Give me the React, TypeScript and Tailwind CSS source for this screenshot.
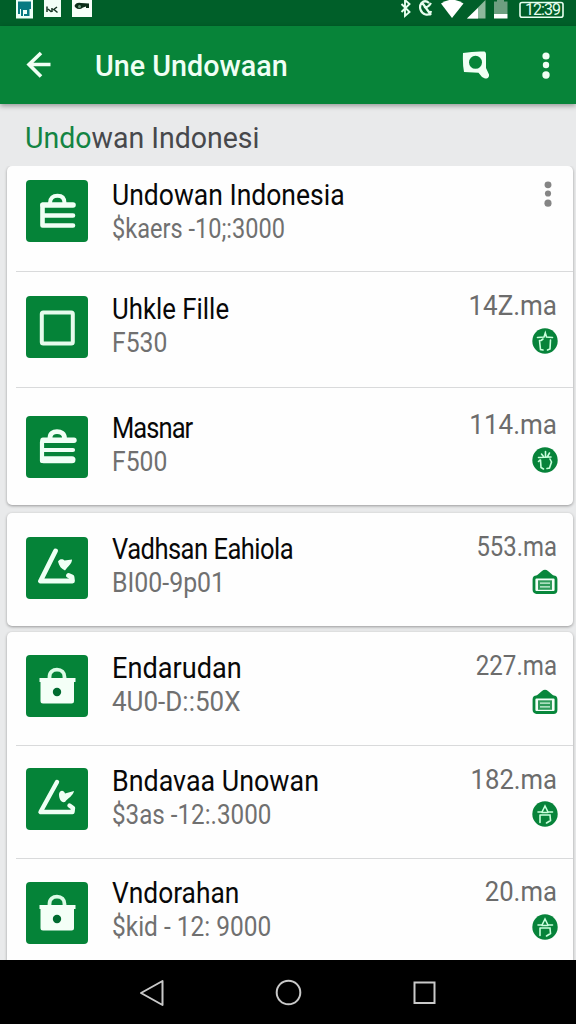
import type { ReactNode } from "react";

type IconName = "case" | "caseBold" | "square" | "slope" | "slopeHeart" | "lock";
type BadgeName = "star" | "bin" | "home" | "pot";

interface Item {
  title: string;
  titleClass: string;
  sub: string;
  subClass: string;
  icon: IconName;
  amount?: string;
  amountClass?: string;
  badge?: BadgeName;
  rowClass: string;
  iconClass: string;
  textClass: string;
  sideClass: string;
  badgeClass?: string;
}

function TileIcon({ name }: { name: IconName }) {
  const art: Record<IconName, ReactNode> = {
    case: (
      <g fill="none" stroke="#f0fff5" strokeLinecap="round" strokeLinejoin="round">
        <path d="M24 23 C24 18 27 15.700 31.500 15.700 C36 15.700 38.500 18 38.500 23" strokeWidth="4" />
        <path d="M17 25 H47" strokeWidth="5.600" />
        <path d="M16.500 25 V45.500 H47 M18 35.500 H47" strokeWidth="4.600" />
      </g>
    ),
    caseBold: (
      <g fill="none" stroke="#f0fff5" strokeLinecap="round" strokeLinejoin="round">
        <path d="M24 22 C24 17.500 27 15.700 31 15.700 C35 15.700 38.500 17.500 38.500 22" strokeWidth="4.800" />
        <path d="M17 24.300 H48" strokeWidth="5.400" />
        <path d="M16 26 V45 M18 34 H47" strokeWidth="4.200" />
        <path d="M17.500 43.800 H46" strokeWidth="7" />
      </g>
    ),
    square: <rect x="15.800" y="16.500" width="31" height="31" rx="1.500" fill="none" stroke="#e6fbec" strokeWidth="4" />,
    slope: (
      <g>
        <path d="M29.500 14 L14.500 44 H46.500 L46 40 L42.500 38.500" fill="none" stroke="#eefff4" strokeWidth="4.800" strokeLinecap="round" strokeLinejoin="round" />
        <path d="M32 24.500 C34 21.500 37 22 38.500 23.500 L46 22.500 C46 27 42 29 39 33.500 C35.500 32 33 29 32 24.500Z" fill="#eefff4" />
      </g>
    ),
    slopeHeart: (
      <g>
        <path d="M31 14 L14.500 44 H46.500 L47 40 L43.500 37.500" fill="none" stroke="#eefff4" strokeWidth="4.400" strokeLinecap="round" strokeLinejoin="round" />
        <path d="M33 26 C34 21.500 38 22 39 25.500 L48 23 C47 28 42 30 39 34 C35 35 33 31 33 26Z" fill="#eefff4" />
      </g>
    ),
    lock: (
      <g>
        <path d="M23.500 24 V22 C23.500 17 27 14.600 31 14.600 C35.500 14.600 38.500 17.500 38.500 22 V24" fill="none" stroke="#dcfbe6" strokeWidth="3.800" />
        <path d="M13.500 23 H49.500 V27 H48 V46 Q48 48.500 45.500 48.500 H17 Q14.500 48.500 14.500 46 V27 H13.500Z" fill="#f4fff7" />
        <circle cx="31" cy="37" r="4.200" fill="#006b30" />
      </g>
    ),
  };
  return (
    <svg viewBox="0 0 62 62" className="block h-full w-full">
      {art[name]}
    </svg>
  );
}

function Badge({ name }: { name: BadgeName }) {
  if (name === "home") {
    return (
      <svg viewBox="0 0 26 26" className="block size-[26px]">
        <path d="M3 8 L10 2 Q13 -0.500 16 2 L23 8Z" fill="#08873c" />
        <rect x="2" y="8" width="22" height="15.500" rx="2.500" fill="#f3fff7" stroke="#08873c" strokeWidth="2.800" />
        <rect x="6" y="11.300" width="14" height="9.500" fill="#2f9b5a" />
        <path d="M8 14.200 H18 M8 17.800 H18" stroke="#d5f5df" strokeWidth="1.300" />
      </svg>
    );
  }
  return (
    <svg viewBox="0 0 26 26" className="block size-[26px]" fill="none" stroke="#c9ffdc" strokeWidth="1.600" strokeLinecap="round">
      <circle cx="13" cy="13" r="12.700" fill="#07833a" stroke="none" />
      {name === "bin" && <path d="M5.500 9.500 L12 9 L13.300 5 L14.500 9 L20.500 9.500 M7.500 12.500 L8.500 21.500 L11 22 M18.500 12 L18 21 L15.500 22 M9 12.500 L11 11" />}
      {name === "pot" && <path d="M9.500 7 L11.500 9.500 M13.500 4.500 V9.500 M17.500 6 L15.500 9.500 M6.500 10.500 L19 10 M8 13 L6.500 14.500 M8.500 13 L9 20.500 L11.500 22 M18 12 L19.500 15 L17.500 21 L15 21.500" />}
      {name === "star" && <path d="M6 11 H10 L13 5 L16 11 H20.500 M10 11.500 L16 11.500 M8 14 V21.500 M8 14 H18 L18.500 19.500 L14.500 22" />}
    </svg>
  );
}

function Dots({ className }: { className: string }) {
  return (
    <svg viewBox="0 0 8 28" className={className} fill="currentColor">
      <circle cx="4" cy="4" r="3.600" />
      <circle cx="4" cy="13" r="3.200" />
      <circle cx="4" cy="23" r="3.700" />
    </svg>
  );
}

function Row({ item }: { item: Item }) {
  return (
    <div className={`flex pl-[19px] pr-4 ${item.rowClass}`}>
      <div className={`h-[62px] w-[62px] shrink-0 rounded-[4px] bg-[#058338] ${item.iconClass}`}>
        <TileIcon name={item.icon} />
      </div>
      <div className={`ml-6 flex flex-1 flex-col items-start whitespace-pre leading-[34px] ${item.textClass}`}>
        <span className={`origin-left text-[29px] text-[#080808] ${item.titleClass}`}>{item.title}</span>
        <span className={`origin-left text-[27px] text-[#707070] ${item.subClass}`}>{item.sub}</span>
      </div>
      <div className={`flex shrink-0 flex-col items-end ${item.sideClass}`}>
        {item.amount ? (
          <span className={`origin-right whitespace-pre text-[27px] leading-[34px] text-[#6c6c6c] ${item.amountClass}`}>{item.amount}</span>
        ) : (
          <Dots className="mr-[5px] h-[27px] w-[8px] text-[#858585]" />
        )}
        {item.badge && (
          <div className={`-mr-[1px] ${item.badgeClass}`}>
            <Badge name={item.badge} />
          </div>
        )}
      </div>
    </div>
  );
}

const groups: { className: string; items: Item[] }[] = [
  {
    className: "h-[339px]",
    items: [
      { title: "Undowan Indonesia", titleClass: "scale-x-[0.914]", sub: "$kaers -10;:3000", subClass: "scale-x-[0.872]", icon: "case", rowClass: "h-[105px]", iconClass: "mt-[14px]", textClass: "pt-[12px]", sideClass: "pt-[15px]" },
      { title: "Uhkle Fille", titleClass: "scale-x-[0.889]", sub: "F530", subClass: "scale-x-[0.914]", icon: "square", amount: "14Z.ma", amountClass: "scale-x-[0.963]", badge: "bin", rowClass: "h-[115px]", iconClass: "mt-[24px]", textClass: "pt-[20px]", sideClass: "pt-[17px]", badgeClass: "mt-[5px]" },
      { title: "Masnar", titleClass: "scale-x-[0.88] tracking-[-1.07px]", sub: "F500", subClass: "scale-x-[0.914]", icon: "caseBold", amount: "114.ma", amountClass: "scale-x-[0.963]", badge: "pot", rowClass: "h-[117px]", iconClass: "mt-[28px]", textClass: "pt-[23px]", sideClass: "pt-[20px]", badgeClass: "mt-[5px]" },
    ],
  },
  {
    className: "mt-2 h-[113px]",
    items: [
      { title: "Vadhsan Eahiola", titleClass: "scale-x-[0.88] tracking-[-0.58px]", sub: "BI00-9p01", subClass: "scale-x-[0.922]", icon: "slope", amount: "553.ma", amountClass: "scale-x-[0.886]", badge: "home", rowClass: "h-[113px]", iconClass: "mt-[24px]", textClass: "pt-[19px]", sideClass: "pt-[17px]", badgeClass: "mt-[5px]" },
    ],
  },
  {
    className: "mt-[6px] h-[350px]",
    items: [
      { title: "Endarudan", titleClass: "scale-x-[0.936]", sub: "4U0-D::50X", subClass: "scale-x-[0.963]", icon: "lock", amount: "227.ma", amountClass: "scale-x-[0.893]", badge: "home", rowClass: "h-[113px]", iconClass: "mt-[23px]", textClass: "pt-[19px]", sideClass: "pt-[17px]", badgeClass: "mt-[6px]" },
      { title: "Bndavaa Unowan", titleClass: "scale-x-[0.926]", sub: "$3as -12:.3000", subClass: "scale-x-[0.896]", icon: "slopeHeart", amount: "182.ma", amountClass: "scale-x-[0.95]", badge: "star", rowClass: "h-[112px]", iconClass: "mt-[22px]", textClass: "pt-[18px]", sideClass: "pt-[17px]", badgeClass: "mt-[4px]" },
      { title: "Vndorahan", titleClass: "scale-x-[0.908]", sub: "$kid - 12: 9000", subClass: "scale-x-[0.906]", icon: "lock", amount: "20.ma", amountClass: "scale-x-[0.95]", badge: "star", rowClass: "h-[112px]", iconClass: "mt-[23px]", textClass: "pt-[17px]", sideClass: "pt-[16px]", badgeClass: "mt-[5px]" },
    ],
  },
];

function StatusBar() {
  return (
    <div className="flex h-[26px] items-start bg-[#005f29] text-[#e8fff0]">
      <svg viewBox="0 0 96 26" className="h-[26px] w-24">
        <rect x="16" y="0" width="17" height="18.500" fill="#eefff7" />
        <path d="M18 1.500 H31 V9 H29.500 V16 H24 V14 H27 V10 H23 V16 H21 V9 H20 V14 H18Z" fill="#087a82" />
        <rect x="44" y="0" width="17" height="17" fill="#f2fff7" />
        <path d="M47 6.500 V12 M48 9 L51.500 12 M52 8 V12 M53 10 L57 7 M54 9.500 L57.500 12.500" stroke="#173424" strokeWidth="1.500" />
        <rect x="72" y="0" width="20" height="17" fill="#f7fff9" />
        <path d="M74.500 6 Q76 2 81 3 L89 3.500 V8 H86 V6.500 L83 7.500 Q79 10.500 75.500 7.500Z" fill="#0a2e18" />
        <circle cx="79.500" cy="6.500" r="1.500" fill="#6e9b80" />
      </svg>
      <svg viewBox="0 0 184 26" className="ml-auto h-[26px] w-[184px]" fill="none" stroke="currentColor">
        <path d="M9.500 4 L17.500 12 L13 16 V0 L17.500 4 L9.500 12" strokeWidth="1.900" />
        <path d="M37 3 Q33 -0.500 29.500 3 C26.500 7 28.500 13 33.500 14.500 Q38 15.500 39 11 M30 2.500 L39 15 M32 7 Q36 8 39 3" strokeWidth="2.200" />
        <path d="M49 3.500 Q60 -4 71.500 3.500 L60 18Z" fill="#fff" stroke="none" />
        <path d="M75 18.500 L93.500 0 V18.500Z" fill="#8db89c" stroke="none" />
        <path d="M75 18.500 L86 8 V18.500Z" fill="#fff" stroke="none" />
        <path d="M102 1.500 H105 V0 H112 V1.500 H115.500 V14 H102Z" fill="#6d9f80" stroke="none" />
        <path d="M102 14 H115.500 V18.500 H102Z" fill="#fff" stroke="none" />
        <rect x="128" y="2.500" width="43" height="14.800" rx="2" strokeWidth="1.600" />
        <text x="133" y="15" fontFamily="Roboto, sans-serif" fontSize="16" fill="currentColor" stroke="none" textLength="36">12:39</text>
      </svg>
    </div>
  );
}

export default function App() {
  return (
    <div className="flex h-[1024px] w-[576px] flex-col overflow-hidden bg-[#e9eaeb] font-['Roboto',sans-serif]">
      <StatusBar />
      <header className="z-10 flex h-[78px] shrink-0 items-center bg-[#078439] text-[#f0fff4] shadow-[0_2px_5px_rgba(0,0,0,0.35)]">
        <svg viewBox="0 0 26 28" className="ml-[26px] h-7 w-[26px]" fill="none" stroke="currentColor" strokeWidth="3.600">
          <path d="M24.500 13.500 H3 M15 2 L3 13.500 L15 25.500" />
        </svg>
        <h1 className="ml-[43px] mt-px origin-left scale-x-[0.957] whitespace-pre text-[30px] font-medium leading-[34px]">Une Undowaan</h1>
        <svg viewBox="0 0 28 30" className="ml-auto h-[30px] w-7">
          <path d="M2 3 Q13 1 23.500 1.500 Q25 2 25 4 V18 L28 24.500 Q28.500 28.500 24 28.500 L21 27 L17.500 22.800 L3 22 Q1.500 15 2 3Z" fill="currentColor" />
          <circle cx="14.500" cy="12.300" r="6.500" fill="#078439" />
        </svg>
        <Dots className="ml-[53px] mr-[26px] mt-px h-7 w-2" />
      </header>
      <div className="h-[62px] shrink-0 whitespace-pre pl-[25px] pt-[17px] text-[29px] leading-[34px] text-[#47484b]">
        <span className="inline-block origin-left scale-x-[0.982]"><span className="text-[#138443]">Undo</span>wan Indonesi</span>
      </div>
      <main className="flex flex-1 flex-col overflow-hidden pl-[7px] pr-[3px]">
        {groups.map((group, index) => (
          <section key={index} className={`shrink-0 rounded-[5px] bg-[#fefefe] shadow-[0_1px_3px_rgba(0,0,0,0.35)] ${group.className}`}>
            {group.items.map((item, position) => (
              <div key={item.title}>
                {position > 0 && <div className="ml-[9px] h-px bg-[#d9dadb]" />}
                <Row item={item} />
              </div>
            ))}
          </section>
        ))}
      </main>
      <nav className="z-10 flex h-16 shrink-0 bg-black text-[#c9c9c9]">
        <svg viewBox="0 0 576 64" className="h-16 w-full" fill="none" stroke="currentColor" strokeWidth="2">
          <path d="M141 33 L162.500 21 V45Z" strokeLinejoin="round" />
          <circle cx="288.500" cy="32.500" r="11.800" />
          <rect x="414.500" y="22.500" width="20" height="20.500" />
        </svg>
      </nav>
    </div>
  );
}
